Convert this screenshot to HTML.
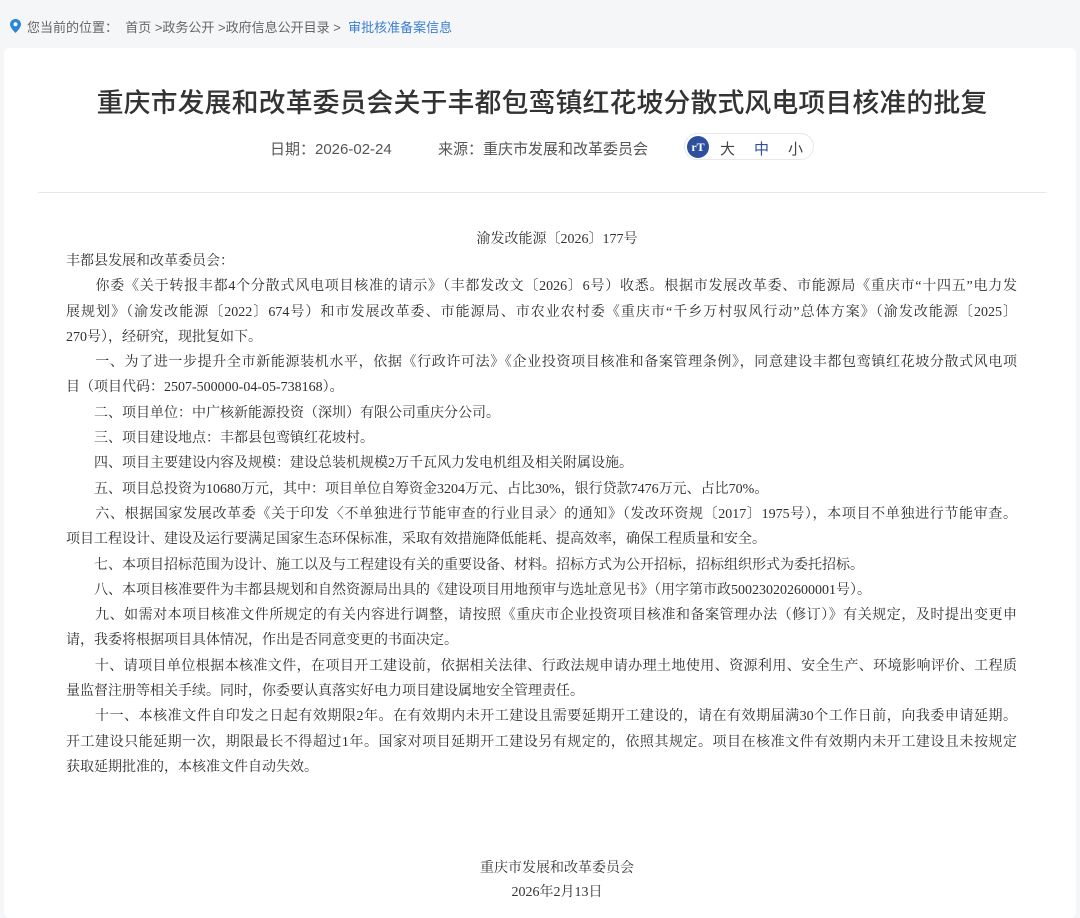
<!DOCTYPE html>
<html><head><meta charset="utf-8"><style>
body{margin:0;width:1080px;height:908px;background:#f4f6f8;position:relative;overflow:hidden;font-family:"Liberation Sans","Noto Sans CJK SC",sans-serif}
.bc{position:absolute;left:10px;top:17px;font-size:13px;color:#666;white-space:nowrap}
.bc b{font-weight:normal;color:#3b7fd0}
.card{position:absolute;left:4px;top:48px;width:1072px;height:870px;background:#fff;border-radius:6px}
.title{position:absolute;left:0;width:1084px;top:81px;text-align:center;font-size:26.9px;color:#333;font-weight:500;letter-spacing:0.1px}
.meta{position:absolute;top:138px;font-size:15px;color:#555;white-space:nowrap}
.fs{position:absolute;left:684px;top:133px;width:130px;height:27px;border:1px solid #e5e8ec;border-radius:14px;box-sizing:border-box}
.fs i{position:absolute;left:2px;top:2px;width:22px;height:22px;border-radius:50%;background:#2d4f9e;color:#fff;font-style:normal;font-size:12px;font-weight:bold;text-align:center;line-height:22px;font-family:"Liberation Serif",serif}
.fs span{position:absolute;top:4px;font-size:15px;color:#444}
.hr{position:absolute;left:38px;top:192px;width:1008px;height:1px;background:#e6e6e6}
.t{position:absolute;left:66px;width:951px;font-family:"Liberation Serif","Noto Serif CJK SC",serif;font-size:14px;color:#2f2f2f;line-height:25.3px}
.l{text-align:justify;text-align-last:justify;white-space:nowrap}
.n{white-space:nowrap}
.c{position:absolute;left:0;width:1114px;text-align:center;font-family:"Liberation Serif","Noto Serif CJK SC",serif;font-size:14px;color:#333}
</style></head><body>
<div class="bc"><svg width="11" height="14" viewBox="0 0 11 14" style="vertical-align:-1px;margin-right:6px"><path d="M5.5 0C2.5 0 0 2.3 0 5.3 0 9 5.5 14 5.5 14S11 9 11 5.3C11 2.3 8.5 0 5.5 0z" fill="#2b86d8"/><circle cx="5.5" cy="5.2" r="2" fill="#fff"/></svg>您当前的位置：&nbsp; 首页 &gt;政务公开 &gt;政府信息公开目录 &gt; &nbsp;<b>审批核准备案信息</b></div>
<div class="card"></div>
<div class="title">重庆市发展和改革委员会关于丰都包鸾镇红花坡分散式风电项目核准的批复</div>
<div class="meta" style="left:270px">日期：2026-02-24</div>
<div class="meta" style="left:438px">来源：重庆市发展和改革委员会</div>
<div class="fs"><i>rT</i><span style="left:35px">大</span><span style="left:69px;color:#2d4f9e">中</span><span style="left:103px">小</span></div>
<div class="hr"></div>
<div class="c" style="top:228px">渝发改能源〔2026〕177号</div>
<div class="t" style="top:249px">
<div class="n">丰都县发展和改革委员会：</div>
<div class="l">　　你委《关于转报丰都4个分散式风电项目核准的请示》（丰都发改文〔2026〕6号）收悉。根据市发展改革委、市能源局《重庆市“十四五”电力发</div>
<div class="l">展规划》（渝发改能源〔2022〕674号）和市发展改革委、市能源局、市农业农村委《重庆市“千乡万村驭风行动”总体方案》（渝发改能源〔2025〕</div>
<div class="n">270号），经研究，现批复如下。</div>
<div class="l">　　一、为了进一步提升全市新能源装机水平，依据《行政许可法》《企业投资项目核准和备案管理条例》，同意建设丰都包鸾镇红花坡分散式风电项</div>
<div class="n">目（项目代码：2507-500000-04-05-738168）。</div>
<div class="n">　　二、项目单位：中广核新能源投资（深圳）有限公司重庆分公司。</div>
<div class="n">　　三、项目建设地点：丰都县包鸾镇红花坡村。</div>
<div class="n">　　四、项目主要建设内容及规模：建设总装机规模2万千瓦风力发电机组及相关附属设施。</div>
<div class="n">　　五、项目总投资为10680万元，其中：项目单位自筹资金3204万元、占比30%，银行贷款7476万元、占比70%。</div>
<div class="l">　　六、根据国家发展改革委《关于印发〈不单独进行节能审查的行业目录〉的通知》（发改环资规〔2017〕1975号），本项目不单独进行节能审查。</div>
<div class="n">项目工程设计、建设及运行要满足国家生态环保标准，采取有效措施降低能耗、提高效率，确保工程质量和安全。</div>
<div class="n">　　七、本项目招标范围为设计、施工以及与工程建设有关的重要设备、材料。招标方式为公开招标，招标组织形式为委托招标。</div>
<div class="n">　　八、本项目核准要件为丰都县规划和自然资源局出具的《建设项目用地预审与选址意见书》（用字第市政500230202600001号）。</div>
<div class="l">　　九、如需对本项目核准文件所规定的有关内容进行调整，请按照《重庆市企业投资项目核准和备案管理办法（修订）》有关规定，及时提出变更申</div>
<div class="n">请，我委将根据项目具体情况，作出是否同意变更的书面决定。</div>
<div class="l">　　十、请项目单位根据本核准文件，在项目开工建设前，依据相关法律、行政法规申请办理土地使用、资源利用、安全生产、环境影响评价、工程质</div>
<div class="n">量监督注册等相关手续。同时，你委要认真落实好电力项目建设属地安全管理责任。</div>
<div class="l">　　十一、本核准文件自印发之日起有效期限2年。在有效期内未开工建设且需要延期开工建设的，请在有效期届满30个工作日前，向我委申请延期。</div>
<div class="l">开工建设只能延期一次，期限最长不得超过1年。国家对项目延期开工建设另有规定的，依照其规定。项目在核准文件有效期内未开工建设且未按规定</div>
<div class="n">获取延期批准的，本核准文件自动失效。</div>
</div>
<div class="c" style="top:857px">重庆市发展和改革委员会</div>
<div class="c" style="top:881px">2026年2月13日</div>
</body></html>
